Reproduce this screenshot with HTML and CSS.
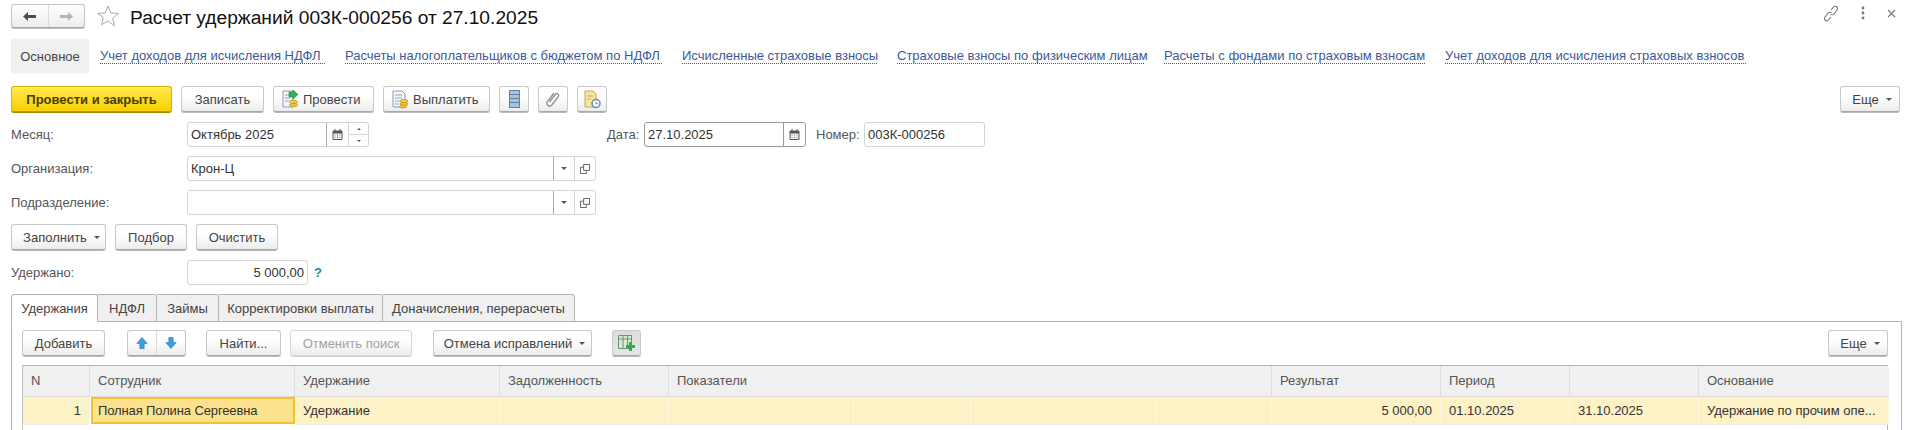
FILE: index.html
```html
<!DOCTYPE html>
<html lang="ru">
<head>
<meta charset="utf-8">
<title>Расчет удержаний</title>
<link rel="stylesheet" href="styles.css">
</head>
<body>
<div class="page">
  <header class="head">
    <div class="nav">
      <button class="nav-btn"><svg width="15" height="11" viewBox="0 0 15 11"><path d="M1 5.500 6 1v3h8v3H6v3z" fill="#4d4d4d"/></svg></button>
      <button class="nav-btn"><svg width="15" height="11" viewBox="0 0 15 11"><path d="M14 5.500 9 1v3H1v3h8v3z" fill="#b5b5b5"/></svg></button>
    </div>
    <svg class="star" width="24" height="24" viewBox="0 0 24 24"><path d="M12 2l2.900 6.900 7.400.6-5.600 4.900 1.700 7.300L12 17l-6.400 3.700 1.700-7.300L1.700 9.500l7.400-.6z" fill="#fff" stroke="#a9a9a9"/></svg>
    <h1 class="title">Расчет удержаний 003К-000256 от 27.10.2025</h1>
    <div class="head-tools">
      <svg width="16" height="17" viewBox="0 0 16 17"><g fill="none" stroke="#777" stroke-width="1.100"><path d="M8 5l2.500-3a2.300 2.300 0 0 1 3.500 3L11 9a2.300 2.300 0 0 1-3.500 0"/><path d="M8 12l-2.500 3a2.300 2.300 0 0 1-3.500-3L5 8a2.300 2.300 0 0 1 3.500 0"/></g></svg>
      <svg class="dots" width="4" height="14" viewBox="0 0 4 14"><g fill="#777"><circle cx="2" cy="2" r="1.400"/><circle cx="2" cy="7" r="1.400"/><circle cx="2" cy="12" r="1.400"/></g></svg>
      <svg width="9" height="9" viewBox="0 0 9 9"><path d="M1 1l7 7M8 1L1 8" stroke="#777" stroke-width="1.100"/></svg>
    </div>
  </header>

  <nav class="sections">
    <span class="section-main">Основное</span>
    <a class="link">Учет доходов для исчисления НДФЛ</a>
    <a class="link">Расчеты налогоплательщиков с бюджетом по НДФЛ</a>
    <a class="link">Исчисленные страховые взносы</a>
    <a class="link">Страховые взносы по физическим лицам</a>
    <a class="link">Расчеты с фондами по страховым взносам</a>
    <a class="link">Учет доходов для исчисления страховых взносов</a>
  </nav>

  <div class="toolbar">
    <button class="btn btn-primary">Провести и закрыть</button>
    <button class="btn w-83">Записать</button>
    <button class="btn btn-icon w-101"><svg width="19" height="19" viewBox="0 0 19 19"><path d="M2 1h10v16H2z" fill="#f4f6fa" stroke="#8a9bb5"/><path d="M4 5h6M4 8h5M4 11h4" stroke="#93a5c0"/><path d="M8 2h4V0l5 4.500L12 9V7H8z" fill="#2fb455" stroke="#1b8a3a" stroke-width=".6"/><ellipse cx="12.500" cy="12" rx="4" ry="1.700" fill="#f2cf4a" stroke="#b98f14" stroke-width=".7"/><ellipse cx="12.500" cy="15" rx="4" ry="1.700" fill="#eec53a" stroke="#b98f14" stroke-width=".7"/></svg>Провести</button>
    <button class="btn btn-icon w-107"><svg width="19" height="19" viewBox="0 0 19 19"><path d="M2 1h9l3 3v13H2z" fill="#f4f6fa" stroke="#8a9bb5"/><path d="M4 5h7M4 8h7M4 11h5M4 14h4" stroke="#93a5c0"/><ellipse cx="13" cy="11" rx="4" ry="1.700" fill="#f2cf4a" stroke="#b98f14" stroke-width=".7"/><ellipse cx="13" cy="14" rx="4" ry="1.700" fill="#eec53a" stroke="#b98f14" stroke-width=".7"/><ellipse cx="12" cy="16.500" rx="3.500" ry="1.500" fill="#eec53a" stroke="#b98f14" stroke-width=".7"/></svg>Выплатить</button>
    <button class="btn btn-square"><svg width="11" height="18" viewBox="0 0 11 18"><rect x=".5" y=".5" width="10" height="17" fill="#a8c2dc" stroke="#5f82a6"/><path d="M1 4.500h9M1 8.500h9M1 12.500h9" stroke="#5f82a6" stroke-width="1.200"/></svg></button>
    <button class="btn btn-square"><svg width="16" height="18" viewBox="0 0 16 18"><path d="M4.500 11 10.500 3a2 2 0 0 1 3 2.500L6.500 14.500a3 3 0 0 1-4.500-3.500L9 2" fill="none" stroke="#8f8f8f" stroke-width="1.300" transform="translate(0 1)"/></svg></button>
    <button class="btn btn-square"><svg width="17" height="19" viewBox="0 0 17 19"><path d="M1 1h8l3 3v13H1z" fill="#f7e6a8" stroke="#c9a64a"/><path d="M3 6h6M3 9h4" stroke="#c9a64a"/><circle cx="12" cy="13.500" r="4" fill="#fff" stroke="#5d87ab" stroke-width="1.500"/><path d="M12 11.500v2.200h2" stroke="#5d87ab" fill="none"/></svg></button>
    <button class="btn btn-more btn-more-top">Еще<i class="caret"></i></button>
  </div>

  <div class="form-row form-row-first">
    <label class="lbl">Месяц:</label>
    <div class="field w-month">
      <span class="val">Октябрь 2025</span>
      <span class="cell cell-cal"><svg class="cal" width="11" height="11" viewBox="0 0 11 11"><path d="M1 2h9v8.500H1z" fill="#fff" stroke="#555"/><path d="M1 2h9v2.500H1z" fill="#555"/><path d="M3 0v2M8 0v2" stroke="#555"/><path d="M2.500 6h1M5 6h1M7.500 6h1M2.500 8.300h1M5 8.300h1M7.500 8.300h1" stroke="#555"/></svg></span>
      <span class="cell cell-spin"><i class="spin-up"></i><i class="spin-down"></i></span>
    </div>
    <label class="lbl-date">Дата:</label>
    <div class="field field-focus w-date">
      <span class="val">27.10.2025</span>
      <span class="cell cell-cal cell-dark"><svg class="cal" width="11" height="11" viewBox="0 0 11 11"><path d="M1 2h9v8.500H1z" fill="#fff" stroke="#555"/><path d="M1 2h9v2.500H1z" fill="#555"/><path d="M3 0v2M8 0v2" stroke="#555"/><path d="M2.500 6h1M5 6h1M7.500 6h1M2.500 8.300h1M5 8.300h1M7.500 8.300h1" stroke="#555"/></svg></span>
    </div>
    <label class="lbl-num">Номер:</label>
    <div class="field w-num"><span class="val">003К-000256</span></div>
  </div>

  <div class="form-row">
    <label class="lbl">Организация:</label>
    <div class="field w-org">
      <span class="val">Крон-Ц</span>
      <span class="cell cell-drop"><i class="caret caret-sm"></i></span>
      <span class="cell cell-open"><svg width="10" height="10" viewBox="0 0 11 11"><path d="M4 .5h6.500V7H4z" fill="none" stroke="#555"/><path d="M3.500 3.500H.5v7H7V8" fill="none" stroke="#555"/></svg></span>
    </div>
  </div>

  <div class="form-row">
    <label class="lbl">Подразделение:</label>
    <div class="field w-org">
      <span class="val"></span>
      <span class="cell cell-drop"><i class="caret caret-sm"></i></span>
      <span class="cell cell-open"><svg width="10" height="10" viewBox="0 0 11 11"><path d="M4 .5h6.500V7H4z" fill="none" stroke="#555"/><path d="M3.500 3.500H.5v7H7V8" fill="none" stroke="#555"/></svg></span>
    </div>
  </div>

  <div class="actions">
    <button class="btn w-95">Заполнить<i class="caret"></i></button>
    <button class="btn w-72">Подбор</button>
    <button class="btn w-82">Очистить</button>
  </div>

  <div class="form-row form-row-held">
    <label class="lbl">Удержано:</label>
    <div class="field w-held"><span class="val val-right">5 000,00</span></div>
    <span class="hint">?</span>
  </div>

  <div class="tabs">
    <span class="tab tab-active">Удержания</span>
    <span class="tab tab-ndfl">НДФЛ</span>
    <span class="tab tab-loans">Займы</span>
    <span class="tab tab-corr">Корректировки выплаты</span>
    <span class="tab tab-extra">Доначисления, перерасчеты</span>
  </div>

  <section class="panel">
    <div class="panel-bar">
      <button class="btn w-83">Добавить</button>
      <div class="arrows">
        <button class="arrow-btn arrow-up"><svg width="12" height="14" viewBox="0 0 14 15"><path d="M7 1l6 7H9.500v6h-5V8H1z" fill="#3c9fdc" stroke="#1e78b5" stroke-width=".7"/></svg></button>
        <button class="arrow-btn"><svg width="12" height="14" viewBox="0 0 14 15"><path d="M7 14 13 7H9.500V1h-5v6H1z" fill="#3c9fdc" stroke="#1e78b5" stroke-width=".7"/></svg></button>
      </div>
      <button class="btn btn-find">Найти...</button>
      <button class="btn btn-disabled">Отменить поиск</button>
      <button class="btn btn-fix">Отмена исправлений<i class="caret"></i></button>
      <button class="btn btn-square btn-pressed"><svg width="18" height="16" viewBox="0 0 18 16"><path d="M.5.5h13v13H.5z" fill="#d8ead0" stroke="#6f8f7a"/><path d="M.5 4h13M5 .5v13M9.500.5v13" stroke="#6f8f7a"/><path d="M11 7h3v3h3v3h-3v3h-3v-3H8v-3h3z" fill="#33a852"/></svg></button>
      <button class="btn btn-more btn-more-panel">Еще<i class="caret"></i></button>
    </div>

    <div class="grid">
      <div class="th">N</div>
      <div class="th">Сотрудник</div>
      <div class="th">Удержание</div>
      <div class="th">Задолженность</div>
      <div class="th th-wide">Показатели</div>
      <div class="th">Результат</div>
      <div class="th">Период</div>
      <div class="th"></div>
      <div class="th th-last">Основание</div>

      <div class="td td-right">1</div>
      <div class="td td-current">Полная Полина Сергеевна</div>
      <div class="td">Удержание</div>
      <div class="td"></div>
      <div class="td"></div>
      <div class="td"></div>
      <div class="td"></div>
      <div class="td"></div>
      <div class="td td-right">5 000,00</div>
      <div class="td">01.10.2025</div>
      <div class="td">31.10.2025</div>
      <div class="td td-last">Удержание по прочим опе...</div>
    </div>
  </section>
</div>
</body>
</html>
```

FILE: styles.css
```css
* { box-sizing: border-box; }
html, body { margin: 0; height: 430px; overflow: hidden; background: #fff; }
body { font: 13px "Liberation Sans", Arial, sans-serif; color: #444; }
.page { width: 1907px; padding: 4px 5px 0 11px; }

.head { display: flex; align-items: center; height: 24px; }
.nav { display: flex; width: 74px; height: 24px; border: 1px solid #c4c4c4; border-bottom-color: #a4a4a4; border-radius: 3px; background: linear-gradient(#fff, #ededed); box-shadow: 0 1px 0 #bdbdbd; }
.nav-btn { flex: 1; padding: 0; border: 0; background: none; display: flex; align-items: center; justify-content: center; }
.nav-btn + .nav-btn { border-left: 1px solid #dcdcdc; }
.star { margin-left: 11px; }
.title { margin: 0 0 0 10px; padding-top: 3px; font-size: 19.2px; font-weight: 400; color: #111; white-space: nowrap; }
.head-tools { margin-left: auto; display: flex; align-items: center; gap: 22px; padding-right: 6px; margin-top: -6px; }

.sections { display: grid; grid-template-columns: 69px 225px 317px 195px 247px 261px 301px; column-gap: 20px; align-items: center; height: 34px; margin-top: 11px; }
.section-main { width: 78px; height: 34px; display: flex; align-items: center; justify-content: center; background: #f0f0f0; border-radius: 3px; color: #444; }
.link { color: #3b5a9a; white-space: nowrap; border-bottom: 1px dotted #3b5a9a; line-height: 14px; }

.toolbar { display: flex; gap: 9px; margin-top: 13px; height: 26px; }
.btn { height: 26px; padding: 0 14px; font: inherit; color: #444; white-space: nowrap; display: inline-flex; align-items: center; justify-content: center; border: 1px solid #c8c8c8; border-bottom-color: #a8a8a8; border-radius: 3px; background: linear-gradient(#fff 40%, #ececec); box-shadow: 0 1px 0 #b9b9b9; }
.btn-primary { width: 161px; font-weight: 700; color: #4b3c00; border-color: #d4b400; border-bottom-color: #b89b00; background: linear-gradient(#ffe94d, #f8cf00); box-shadow: 0 1px 0 #a48a00; }
.btn-icon { justify-content: flex-start; padding: 0 0 0 7px; gap: 3px; }
.btn-square { width: 30px; padding: 0; }
.btn-more { width: 60px; padding: 0 0 0 4px; }
.btn-more-top { margin-left: auto; margin-right: 2px; }
.w-72 { width: 72px; padding: 0; }
.w-82 { width: 82px; padding: 0; }
.w-83 { width: 83px; padding: 0; }
.w-95 { width: 95px; padding: 0 0 0 6px; }
.w-101 { width: 101px; }
.w-107 { width: 107px; }
.caret { display: inline-block; margin-left: 7px; border: 3px solid transparent; border-top: 3px solid #555; border-bottom: 0; }
.caret-sm { margin: 0; }

.form-row { display: flex; align-items: center; height: 25px; margin-top: 9px; }
.form-row-first { margin-top: 10px; }
.form-row-held { margin-top: 10px; }
.lbl { width: 176px; color: #555; }
.lbl-date { margin-left: 238px; width: 37px; color: #555; }
.lbl-num { margin-left: 10px; width: 48px; color: #555; }
.field { height: 25px; display: flex; align-items: stretch; border: 1px solid #d4d4d4; border-radius: 3px; background: #fff; }
.field-focus { border-color: #9a9a9a; }
.val { flex: 1; padding-left: 3px; line-height: 23px; color: #333; white-space: nowrap; }
.val-right { text-align: right; padding: 0 3px 0 0; }
.cell { display: flex; align-items: center; justify-content: center; border-left: 1px solid #a9a9a9; }
.cell-cal { width: 22px; }
.cell-cal.cell-dark { border-left-color: #9a9a9a; }
.cell-spin { width: 20px; flex-direction: column; border-left-color: #d4d4d4; }
.spin-up, .spin-down { flex: 1; width: 100%; display: flex; align-items: center; justify-content: center; }
.spin-up { border-bottom: 1px solid #d4d4d4; }
.spin-up::after { content: ""; border: 2px solid transparent; border-bottom: 2px solid #555; border-top: 0; }
.spin-down::after { content: ""; border: 2px solid transparent; border-top: 2px solid #555; border-bottom: 0; }
.cell-drop { width: 21px; }
.cell-open { width: 21px; border-left-color: #d4d4d4; }
.w-month { width: 182px; }
.w-date { width: 162px; }
.w-num { width: 121px; }
.w-org { width: 409px; }
.w-held { width: 121px; }
.hint { margin-left: 6px; font-weight: 700; color: #2a7fa8; }

.actions { display: flex; gap: 9px; margin-top: 9px; height: 26px; }

.tabs { display: flex; height: 28px; margin-top: 9px; position: relative; z-index: 1; }
.tab { height: 28px; display: flex; align-items: center; justify-content: center; background: #f0f0f0; border: 1px solid #b4b4b4; border-left: 0; border-radius: 0 3px 0 0; color: #444; white-space: nowrap; }
.tab-active { width: 87px; background: #fff; border-left: 1px solid #b4b4b4; border-bottom-color: #fff; border-radius: 3px 3px 0 0; }
.tab-ndfl { width: 59px; }
.tab-loans { width: 62px; }
.tab-corr { width: 164px; }
.tab-extra { width: 192px; }
.panel { margin-top: -1px; width: 1891px; height: 120px; padding: 8px 13px 0 10px; border: 1px solid #b4b4b4; border-bottom: 0; }
.panel-bar { display: flex; height: 26px; }
.arrows { width: 59px; height: 26px; margin-left: 22px; display: flex; border: 1px solid #c8c8c8; border-bottom-color: #a8a8a8; border-radius: 3px; background: linear-gradient(#fff 40%, #ececec); box-shadow: 0 1px 0 #b9b9b9; }
.arrow-btn { flex: 1; padding: 0; border: 0; background: none; display: flex; align-items: center; justify-content: center; }
.arrow-btn + .arrow-btn { border-left: 1px solid #dcdcdc; }
.btn-find { margin-left: 20px; width: 75px; padding: 0; }
.btn-disabled { margin-left: 9px; width: 122px; padding: 0; color: #a2a2a2; border-color: #d6d6d6; box-shadow: 0 1px 0 #d0d0d0; }
.btn-fix { margin-left: 21px; width: 159px; padding: 0 0 0 4px; }
.btn-pressed { margin-left: 20px; width: 29px; background: linear-gradient(#dcdcdc, #e6e6e6); }
.btn-more-panel { margin-left: auto; }

.grid { display: grid; margin-top: 9px; width: 1866px; height: 65px; align-content: start; grid-template-columns: 67px 205px 205px 169px 185px 117px 185px 116px 169px 129px 129px 190px; border-top: 1px solid #b4b4b4; border-right: 1px solid #b4b4b4; border-left: 1px solid #c4c4c4; }
.th { height: 31px; padding: 0 8px; line-height: 30px; background: #f0f0f0; color: #555; border-right: 1px solid #dcdcdc; border-bottom: 1px solid #dedede; white-space: nowrap; }
.th-wide { grid-column: span 4; }
.th-last, .td-last { border-right: 0; }
.td { height: 28px; padding: 0 8px; line-height: 27px; background: #fdf1c6; color: #333; border-right: 1px solid #fff7df; border-bottom: 1px solid #ececec; white-space: nowrap; overflow: hidden; }
.td-right { text-align: right; }
.td-current { background: #fde28c; border: 2px solid #f3c034; border-bottom-width: 2px; margin-left: 1px; padding: 0 5px; line-height: 23px; height: 27px; letter-spacing: -.12px; }
```
